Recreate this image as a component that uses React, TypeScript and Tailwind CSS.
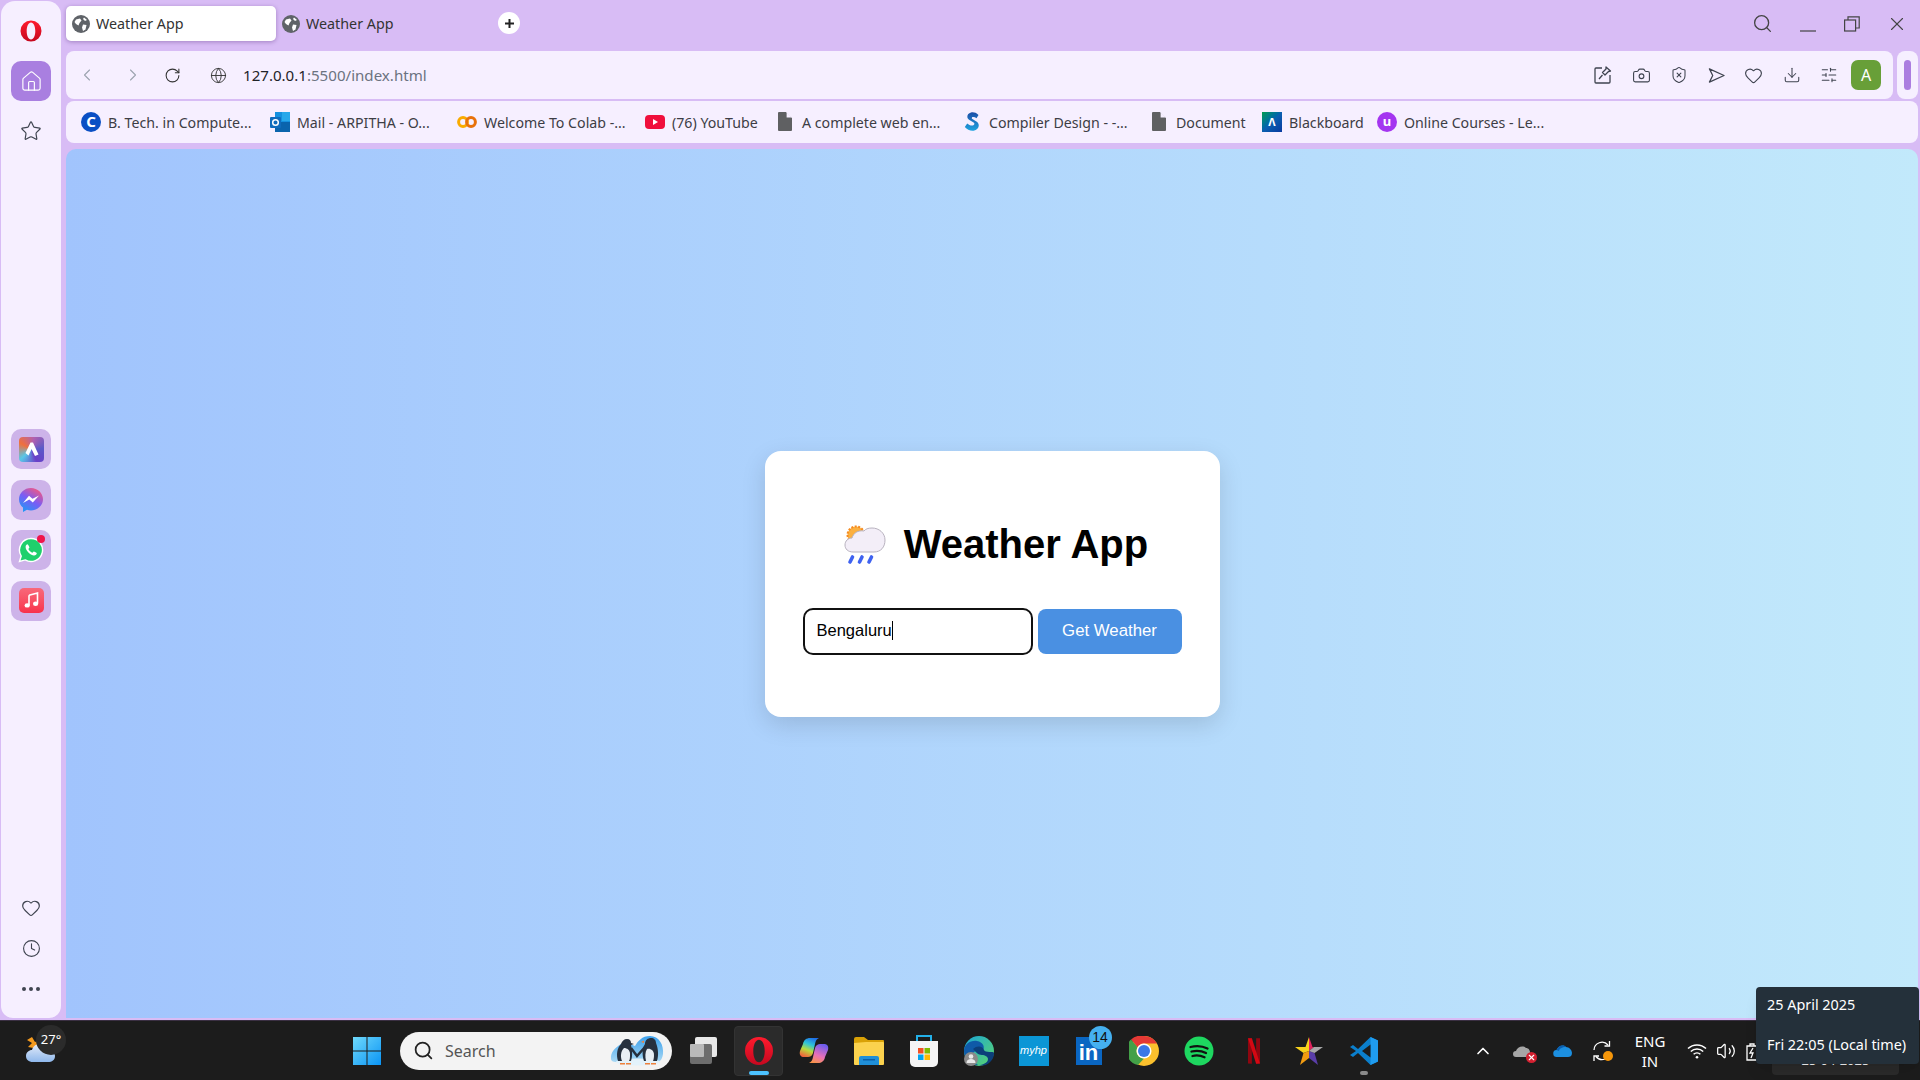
import React from 'react';
import {
  Camera, ChevronLeft, ChevronRight, ChevronUp, Clock, Download, Globe, Heart, Home, RotateCw,
  Search, ShieldX, SlidersHorizontal, Star, Volume2, X,
} from 'lucide-react';

const OperaLogo = ({ size = 24 }: { size?: number }) => (
  <svg width={size} height={size} viewBox="0 0 24 24">
    <defs>
      <linearGradient id="operaRed" x1="0" y1="0" x2="0" y2="1">
        <stop offset="0" stopColor="#ff1b2d" />
        <stop offset="1" stopColor="#c5081f" />
      </linearGradient>
    </defs>
    <path
      fillRule="evenodd"
      d="M12 1.500a10.500 10.500 0 1 0 0 21 10.500 10.500 0 0 0 0-21zM12 3.500c2.600 0 4.300 3.800 4.300 8.500s-1.700 8.500-4.300 8.500-4.300-3.800-4.300-8.500 1.700-8.500 4.300-8.500z"
      fill="url(#operaRed)"
    />
  </svg>
);

const TabGlobe = () => (
  <svg width="18" height="18" viewBox="0 0 18 18">
    <circle cx="9" cy="9" r="9" fill="#5f6368" />
    <path d="M4 4.500 8 3.500l1.500 2-2 2.500-1 2.500L4 9 2.500 7zM11 9.500l3.500.5-1 4.500-2.500 1.500-1-3.500zM12 2.500l3 2.500-2 1-2-2z" fill="#fff" />
  </svg>
);

const DocIcon = () => (
  <svg width="14" height="19" viewBox="0 0 14 19">
    <path d="M1 0h7l6 6v12a1 1 0 0 1-1 1H1a1 1 0 0 1-1-1V1a1 1 0 0 1 1-1z" fill="#5f6062" />
    <path d="M8.600 0 14 5.400H8.600z" fill="#f6efff" />
  </svg>
);

const bookmarks = [
  {
    label: 'B. Tech. in Compute...',
    box: 'w-[145px]',
    icon: (
      <span className="flex h-5 w-5 items-center justify-center rounded-full bg-[#0a4fc4] text-[15px] font-bold leading-none text-white">C</span>
    ),
  },
  {
    label: 'Mail - ARPITHA - O...',
    box: 'w-[143px]',
    icon: (
      <svg width="20" height="20" viewBox="0 0 20 20">
        <rect x="5" y="0" width="15" height="20" fill="#1490df" />
        <rect x="12" y="0" width="8" height="9" fill="#28a8ea" />
        <path d="M5 10h15v10H5z" fill="#0a64ad" />
        <rect x="0" y="5" width="11" height="11" rx="1" fill="#0f6cbd" />
        <circle cx="5.500" cy="10.500" r="2.800" fill="none" stroke="#fff" strokeWidth="1.500" />
      </svg>
    ),
  },
  {
    label: 'Welcome To Colab -...',
    box: 'w-[144px]',
    icon: (
      <svg width="20" height="14" viewBox="0 0 20 14">
        <circle cx="6" cy="7" r="4.400" fill="none" stroke="#f9ab00" strokeWidth="3" />
        <circle cx="14" cy="7" r="4.400" fill="none" stroke="#e8710a" strokeWidth="3" />
      </svg>
    ),
  },
  {
    label: '(76) YouTube',
    box: 'w-[86px]',
    icon: (
      <svg width="20" height="14" viewBox="0 0 20 14">
        <rect width="20" height="14" rx="4" fill="#f00f3c" />
        <path d="M8 4l5 3-5 3z" fill="#fff" />
      </svg>
    ),
  },
  { label: 'A complete web en...', box: 'w-[143px]', icon: <DocIcon /> },
  {
    label: 'Compiler Design - -...',
    box: 'w-[143px]',
    icon: (
      <svg width="16" height="22" viewBox="0 0 16 22">
        <defs>
          <linearGradient id="sLogo" x1="0" y1="0" x2="0" y2="1">
            <stop offset="0" stopColor="#1b4fa8" />
            <stop offset="1" stopColor="#1fa4e0" />
          </linearGradient>
        </defs>
        <path d="M14.500 4C12 1.500 9 1 7 1.600 3 2.600 2 7 5.400 9l4.200 2.500c1.500 1 .8 2.800-.9 3-1.900.3-3.900-.6-5.500-2L.800 16c2.200 2.500 5.400 4.200 8.800 3.800 5-.7 7-6 3.200-9L8.400 8.100c-1-.7-.6-1.900.5-2 1.200-.2 2.500.4 3.600 1.200z" fill="url(#sLogo)" />
      </svg>
    ),
  },
  { label: 'Document', box: 'w-[69px]', icon: <DocIcon /> },
  {
    label: 'Blackboard',
    box: 'w-[71px]',
    icon: (
      <span className="flex h-5 w-5 items-center justify-center bg-gradient-to-br from-[#0a9a4a] via-[#0b5fb0] to-[#0b3aa0] text-[11px] font-bold leading-none text-white">Λ</span>
    ),
  },
  {
    label: 'Online Courses - Le...',
    box: 'w-[142px]',
    icon: (
      <span className="flex h-5 w-5 items-center justify-center rounded-full bg-[#a435f0] text-[13px] font-bold leading-none text-white">u</span>
    ),
  },
];

const sideApps = [
  (
    <span key="aria" className="flex h-[25px] w-[25px] items-center justify-center rounded-[4px] bg-[conic-gradient(from_300deg,#f0703c,#b060b0,#5a5ac8,#6a3fc8,#58c8e8,#f0703c)]">
      <svg width="17" height="17" viewBox="0 0 17 17"><path d="M7.500 1.500 2.500 12l3 2.500L8.500 8l3.500 7 3.500-1.500L10 1.500z" fill="#fff" /></svg>
    </span>
  ),
  (
    <svg key="msg" width="26" height="26" viewBox="0 0 26 26">
      <defs>
        <linearGradient id="msgGrad" x1="0.200" y1="1" x2="0.800" y2="0">
          <stop offset="0" stopColor="#1d9bf6" />
          <stop offset="0.500" stopColor="#7a5cf5" />
          <stop offset="1" stopColor="#f9587b" />
        </linearGradient>
      </defs>
      <path d="M13 1C6.400 1 1 5.900 1 12.300c0 3.400 1.500 6.300 4 8.300V25l4-2.200c1.300.4 2.600.6 4 .6 6.600 0 12-5 12-11.100S19.600 1 13 1z" fill="url(#msgGrad)" />
      <path d="m5 16 6-7.200 3.500 3 6.500-3.300-6.200 7-3.500-3z" fill="#fff" />
    </svg>
  ),
  (
    <span key="wa" className="relative flex h-[26px] w-[26px] items-center justify-center">
      <svg width="26" height="26" viewBox="0 0 26 26">
        <path d="M13 1.500A11.500 11.500 0 0 0 3.200 19L1.500 24.500l5.700-1.600A11.500 11.500 0 1 0 13 1.500z" fill="#1fd06c" stroke="#fff" strokeWidth="1.400" />
        <path d="M9.400 7.200c-.6 0-1.800 1-1.800 2.700 0 3 3.700 7.600 8 8.600 1.800.3 3.200-1 3.200-2.200 0-.5-2.400-1.700-3-1.700-.4 0-1 1.200-1.400 1.200-1.200-.2-3.600-2.400-4-3.800 0-.4 1-1 1-1.500 0-.4-1.200-3.300-2-3.300z" fill="#fff" />
      </svg>
      <span className="absolute -right-[1px] -top-[2px] h-2 w-2 rounded-full bg-[#f0144a]" />
    </span>
  ),
  (
    <span key="music" className="flex h-[25px] w-[25px] items-center justify-center rounded-[5px] bg-gradient-to-b from-[#f8687a] to-[#f8304c]">
      <svg width="17" height="17" viewBox="0 0 17 17">
        <path d="M6 3.200 14.500 1v10.600" fill="none" stroke="#fff" strokeWidth="1.600" />
        <path d="M6 3.200v10" fill="none" stroke="#fff" strokeWidth="1.600" />
        <ellipse cx="4.200" cy="13.400" rx="2.600" ry="2.200" fill="#fff" />
        <ellipse cx="12.600" cy="11.800" rx="2.600" ry="2.200" fill="#fff" />
      </svg>
    </span>
  ),
];

const Sidebar = () => (
  <aside className="mb-[2px] ml-[1px] mt-[1px] flex w-[60px] flex-col items-center rounded-b-[12px] rounded-t-[14px] bg-[#f6efff] pt-[18px]">
    <OperaLogo size={24} />
    <button className="mt-[18px] flex h-10 w-10 items-center justify-center rounded-[10px] bg-[#a97fe0]">
      <Home size={23} strokeWidth={1.2} className="text-white" />
    </button>
    <Star size={22} strokeWidth={1.3} className="mt-[19px] text-[#3f4450]" />
    <div className="mt-[287px] flex flex-col gap-[10.500px]">
      {sideApps.map((icon, i) => (
        <div key={i} className="flex h-10 w-10 items-center justify-center rounded-[10px] bg-[#cdb3e9]">
          {icon}
        </div>
      ))}
    </div>
    <Heart size={20} strokeWidth={1.4} className="mt-[277px] text-[#3f4450]" />
    <Clock size={19} strokeWidth={1.4} className="mt-[21px] text-[#3f4450]" />
    <div className="mt-[29px] flex gap-[3px]">
      <span className="h-1 w-1 rounded-full bg-[#3f4450]" />
      <span className="h-1 w-1 rounded-full bg-[#3f4450]" />
      <span className="h-1 w-1 rounded-full bg-[#3f4450]" />
    </div>
  </aside>
);

const TabStrip = () => (
  <div className="flex h-[51px] items-start pt-[6px]">
    <div className="flex h-[35px] w-[210px] items-center gap-[6px] rounded-[5px] bg-white pl-[6px] shadow-[0_1px_4px_rgba(60,20,100,0.35)]">
      <TabGlobe />
      <span className="text-[14.300px] text-[#333]">Weather App</span>
    </div>
    <div className="ml-[6px] flex h-[35px] w-[205px] items-center gap-[6px]">
      <TabGlobe />
      <span className="text-[14.300px] text-[#333]">Weather App</span>
    </div>
    <button className="ml-[11px] mt-[6px] flex h-[22px] w-[22px] items-center justify-center rounded-full bg-white">
      <svg width="11" height="11" viewBox="0 0 11 11"><path d="M5.500 1v9M1 5.500h9" stroke="#222" strokeWidth="2" /></svg>
    </button>
    <div className="ml-auto flex h-[35px] items-center text-[#444]">
      <Search size={21} strokeWidth={1.5} />
      <svg width="16" height="16" viewBox="0 0 16 16" className="ml-[27px]"><path d="M0 15h16" stroke="#444" strokeWidth="1.200" /></svg>
      <svg width="16" height="16" viewBox="0 0 16 16" className="ml-[28px]" fill="none" stroke="#444" strokeWidth="1.200">
        <rect x="0.600" y="4" width="11" height="11" />
        <path d="M4 4V.8h11.200V12H12" />
      </svg>
      <X size={22} strokeWidth={1.2} className="ml-[26px] mr-[10px]" />
    </div>
  </div>
);

const CaptureIcon = () => (
  <svg width="18" height="18" viewBox="0 0 18 18" fill="none" stroke="#3f4450" strokeWidth="1.300" strokeLinejoin="round">
    <path d="M8 2H2a1 1 0 0 0-1 1v13a1 1 0 0 0 1 1h13a1 1 0 0 0 1-1V9" />
    <path d="m12 1 4.500 4-2 .5-3.500 3.500-2.500-2.500 3.500-3.500zM8.500 9 5 13" />
  </svg>
);

const FlowIcon = () => (
  <svg width="17" height="17" viewBox="0 0 18 18" fill="none" stroke="#3f4450" strokeWidth="1.300" strokeLinejoin="round">
    <path d="M1.500 2 17 9 1.500 16 5 9z" />
  </svg>
);

const AddressBar = () => (
  <div className="flex h-[48px]">
    <div className="flex flex-1 items-center rounded-[8px] bg-[#f6efff] pl-[11px]">
      <ChevronLeft size={20} strokeWidth={1.3} className="text-[#9ca3af]" />
      <ChevronRight size={20} strokeWidth={1.3} className="ml-[26px] text-[#9ca3af]" />
      <RotateCw size={17} strokeWidth={1.5} className="ml-[21px] text-[#333]" />
      <Globe size={17} strokeWidth={1.3} className="ml-[29px] text-[#333]" />
      <span className="ml-[16px] text-[15.100px] text-[#1f2328]">
        127.0.0.1<span className="text-[#6b7280]">:5500/index.html</span>
      </span>
      <div className="ml-auto mr-[-1px] flex items-center gap-[19.500px] text-[#3f4450]">
        <CaptureIcon />
        <Camera size={19} strokeWidth={1.4} />
        <ShieldX size={18} strokeWidth={1.4} />
        <FlowIcon />
        <Heart size={19} strokeWidth={1.4} />
        <Download size={18} strokeWidth={1.4} />
        <SlidersHorizontal size={18} strokeWidth={1.4} />
      </div>
      <div className="ml-[14px] mr-[12px] flex h-[30px] w-[30px] items-center justify-center rounded-[7px] bg-[#689f38] text-[16px] text-white">A</div>
    </div>
    <div className="ml-[4px] flex w-[21px] items-center justify-center rounded-[8px] bg-[#f6efff]">
      <span className="h-[30px] w-[7px] rounded-full bg-[#ab7de0]" />
    </div>
  </div>
);

const BookmarksBar = () => (
  <div className="mt-[2px] flex h-[42px] items-center gap-[17px] rounded-[8px] bg-[#f6efff] pl-[15px]">
    {bookmarks.map((b) => (
      <div key={b.label} className="flex items-center">
        <span className="flex w-5 justify-center">{b.icon}</span>
        <span className={`ml-[7px] mt-[2px] whitespace-nowrap text-[14.200px] text-[#3d3d45] ${b.box}`}>{b.label}</span>
      </div>
    ))}
  </div>
);

const CloudRainIcon = () => (
  <svg width="46" height="44" viewBox="0 0 46 44">
    <circle cx="13" cy="13" r="8.500" fill="#fbb040" stroke="#f58a1f" strokeWidth="2" strokeDasharray="2 1.500" />
    <path d="M10 30c-5 0-8-3-8-7 0-4 3-7 7-7 1.500-5 6-8 12-7 1.500-2 4-3 8-3 7 0 13 5 13 12 0 7-4 12-11 12z" fill="#f3eef8" stroke="#b8b2bf" strokeWidth="1" />
    <path d="M9.500 35 7 40M19 35l-2.500 5M28.500 35 26 40" stroke="#3f62f0" strokeWidth="3.600" strokeLinecap="round" />
  </svg>
);

const WeatherCard = () => (
  <div className="flex h-[266px] w-[455px] flex-col items-center rounded-[16px] bg-white pt-[69px] shadow-[0_8px_24px_rgba(0,0,0,0.13)]">
    <div className="ml-[7px] flex h-[48px] items-center gap-[15px]">
      <CloudRainIcon />
      <h1 className="font-['Liberation_Sans',Arial,sans-serif] text-[40px] font-bold leading-none text-black">Weather App</h1>
    </div>
    <div className="mt-[40px] flex items-center gap-[5px] font-['Liberation_Sans',Arial,sans-serif]">
      <div className="flex h-[47px] w-[230px] items-center rounded-[10px] border-2 border-[#111] pb-[1px] pl-[12px] text-[16.500px] text-black">
        Bengaluru<span className="h-[19px] w-px bg-black" />
      </div>
      <button className="h-[45px] w-[144px] rounded-[8px] bg-[#4a90e2] text-[16.800px] text-white">Get Weather</button>
    </div>
  </div>
);

const WeatherTile = () => (
  <div className="relative h-[44px] w-[50px]">
    <svg width="36" height="36" viewBox="0 0 36 36" className="ml-[8px] mt-[7px]">
      <defs>
        <linearGradient id="wCloud" x1="0" y1="0" x2="0" y2="1">
          <stop offset="0" stopColor="#e4ecfa" />
          <stop offset="1" stopColor="#8fb8ec" />
        </linearGradient>
      </defs>
      <path d="m7 5 3 5 5-2-1 9-11-2 4-4-5-3z" fill="#f49a1e" />
      <path d="M8 30c-4.500 0-7-2.500-7-6s3-6 6-6c1.500-5 6-7 10-6 3.500.7 5.500 3.500 6 6.500 4 .2 7 2 7 5.500 0 4-3 6-7 6z" fill="url(#wCloud)" />
    </svg>
    <span className="absolute left-[19px] -top-[7px] flex h-[30px] w-[30px] items-center justify-center rounded-full bg-[#2b2b2b] text-[13px] text-white">27°</span>
  </div>
);

const StartLogo = () => (
  <svg width="30" height="30" viewBox="0 0 30 30">
    <defs>
      <linearGradient id="winGrad" x1="0" y1="0" x2="1" y2="1">
        <stop offset="0" stopColor="#6fd9fb" />
        <stop offset="1" stopColor="#0a94f5" />
      </linearGradient>
    </defs>
    <path d="M1 1h13.500v13.500H1zM15.500 1H29v13.500H15.500zM1 15.500h13.500V29H1zM15.500 15.500H29V29H15.500z" fill="url(#winGrad)" />
  </svg>
);

const PenguinArt = () => (
  <svg width="54" height="32" viewBox="0 0 54 32">
    <defs>
      <linearGradient id="penSky" x1="0" y1="0" x2="0" y2="1">
        <stop offset="0" stopColor="#3aa0ec" />
        <stop offset="1" stopColor="#a8d8f4" />
      </linearGradient>
    </defs>
    <path d="M1 24C0 17 6 12 11 9c5-3 9 0 14 2 3-5 7-10 15-10 9 0 14 9 13 18-.5 4-2 7-5 8H6c-3 0-5-1-5-3z" fill="url(#penSky)" />
    <ellipse cx="28" cy="27" rx="22" ry="3.500" fill="#e3f2fb" />
    {/* left penguin */}
    <path d="M8 26c-2-6-1-13 3-17 1-3 3-5 6-5 3 0 4 2 4 4l3 1-3 1c1 5 2 10 0 16z" fill="#26303e" />
    <path d="M12 26c-2-5-1-10 2-13 3 0 6 2 6 6s0 5-1 7z" fill="#e8eef4" />
    <path d="M10 28h5v1.500h-5zM16 28h5v1.500h-5z" fill="#f0803a" />
    {/* right penguin */}
    <path d="M34 26c-2-6-2-13 1-17 0-4 3-6 6-6 3 0 5 2 5 5 2 5 3 12 1 18z" fill="#26303e" />
    <path d="M36 26c-1-4-1-9 1-12 3-1 7 1 7 6 0 3-.5 5-1 6z" fill="#e8eef4" />
    <path d="M34 8l-3-1 3-1.500z" fill="#f0803a" />
    <path d="M35 28h5v1.500h-5zM41 28h5v1.500h-5z" fill="#f0803a" />
    <path d="M21 13l6 8 8-9" fill="none" stroke="#26303e" strokeWidth="2.500" />
  </svg>
);

const SearchPill = () => (
  <div className="flex h-[38px] w-[272px] items-center rounded-full bg-[#f3f3f3] pl-[13px] pr-[8px]">
    <Search size={21} strokeWidth={2} className="text-[#222]" />
    <span className="ml-[11px] text-[16px] text-[#555]">Search</span>
    <span className="ml-auto flex"><PenguinArt /></span>
  </div>
);

const taskIcons = [
  {
    name: 'files',
    node: (
      <svg width="30" height="30" viewBox="0 0 30 30">
        <rect x="6" y="1" width="22" height="20" rx="2" fill="#e8e8e8" />
        <rect x="1" y="8" width="22" height="20" rx="2" fill="#6d6d6d" />
        <rect x="1" y="8" width="14" height="13" rx="1" fill="#b9b9b9" />
      </svg>
    ),
  },
  { name: 'opera', node: <OperaLogo size={32} />, active: true },
  {
    name: 'copilot',
    node: (
      <svg width="30" height="27" viewBox="0 0 30 27">
        <defs>
          <linearGradient id="copA" x1="0.700" y1="0" x2="0.300" y2="1">
            <stop offset="0" stopColor="#1f6fe8" />
            <stop offset="0.350" stopColor="#2ec4d8" />
            <stop offset="0.650" stopColor="#b8dc3c" />
            <stop offset="1" stopColor="#f0643c" />
          </linearGradient>
          <linearGradient id="copB" x1="0.700" y1="0" x2="0.300" y2="1">
            <stop offset="0" stopColor="#6a5cf0" />
            <stop offset="0.600" stopColor="#e870b8" />
            <stop offset="1" stopColor="#f8934a" />
          </linearGradient>
        </defs>
        <path d="M11 1h9c-2.500 1-3.500 3-4 6l-2 9c-1 3-3 4-5 4H5c-3 0-5-2-4-6L4 7c.7-4 3.500-6 7-6z" fill="url(#copA)" />
        <path d="M19 26h-9c2.500-1 3.500-3 4-6l2-9c1-3 3-4 5-4h4c3 0 5 2 4 6l-3 7c-.7 4-3.500 6-7 6z" fill="url(#copB)" />
      </svg>
    ),
  },
  {
    name: 'explorer',
    node: (
      <svg width="30" height="30" viewBox="0 0 30 30">
        <path d="M0 3a2 2 0 0 1 2-2h8l4 3h15a1 1 0 0 1 1 1v5H0z" fill="#d9a106" />
        <path d="M0 7l12-1h17a1 1 0 0 1 1 1v21a1 1 0 0 1-1 1H1a1 1 0 0 1-1-1z" fill="#fbd24e" />
        <path d="M5 29v-7a2 2 0 0 1 2-2h16a2 2 0 0 1 2 2v7z" fill="#1f8fd8" />
        <rect x="9" y="23" width="12" height="1.500" fill="#0b5fa8" />
      </svg>
    ),
  },
  {
    name: 'store',
    node: (
      <svg width="30" height="34" viewBox="0 0 30 34">
        <path d="M8 9V2h14v7" fill="none" stroke="#23b0e8" strokeWidth="2" />
        <path d="M1 7h28v21a5 5 0 0 1-5 5H6a5 5 0 0 1-5-5z" fill="#f5f5f5" />
        <rect x="9" y="14" width="5.500" height="5.500" fill="#f25022" />
        <rect x="15.500" y="14" width="5.500" height="5.500" fill="#7fba00" />
        <rect x="9" y="20.500" width="5.500" height="5.500" fill="#00a4ef" />
        <rect x="15.500" y="20.500" width="5.500" height="5.500" fill="#ffb900" />
      </svg>
    ),
  },
  {
    name: 'edge',
    node: (
      <svg width="32" height="32" viewBox="0 0 32 32">
        <defs>
          <linearGradient id="edgeGrad" x1="0" y1="0" x2="1" y2="1">
            <stop offset="0" stopColor="#1aa6d8" />
            <stop offset="1" stopColor="#5dd66a" />
          </linearGradient>
        </defs>
        <circle cx="16" cy="16" r="15" fill="url(#edgeGrad)" />
        <path d="M1 16C1 9 8 5 14 6c6 1 8 6 6 9-3 1-7 0-9 2-3 3-1 9 4 13C8 30 1 24 1 16z" fill="#0f5aa8" />
        <path d="M10 14c4-4 10-3 11 1 1 3 10 1 10 3 0 3-1 7-5 10-2 2-6 3-10 2 3 0 9-2 9-6 0-2-3-4-6-4-4 0-6-3-9-6z" fill="#0c3f7a" />
        <circle cx="8" cy="24" r="7" fill="#8a8a8a" />
        <circle cx="8" cy="21.500" r="2.300" fill="#e8e8e8" />
        <path d="M3.500 28c0-3 2-4 4.500-4s4.500 1 4.500 4z" fill="#e8e8e8" />
      </svg>
    ),
  },
  {
    name: 'myhp',
    node: (
      <span className="flex h-[30px] w-[30px] items-center justify-center bg-[#0b96d6] font-['Liberation_Sans',Arial,sans-serif] text-[11px] italic text-white">myhp</span>
    ),
  },
  {
    name: 'linkedin',
    node: (
      <span className="relative flex h-[28px] w-[26px] items-end justify-center bg-[#0a66c2] pb-px font-['Liberation_Sans',Arial,sans-serif] text-[22px] font-bold leading-none text-white">
        in
        <span className="absolute -right-[10px] -top-[11px] flex h-[23px] w-[23px] items-center justify-center rounded-full bg-[#45b0f0] text-[14px] font-normal text-[#111]">14</span>
      </span>
    ),
  },
  {
    name: 'chrome',
    node: (
      <svg width="30" height="30" viewBox="0 0 30 30">
        <circle cx="15" cy="15" r="15" fill="#fbc02d" />
        <path d="M15 0a15 15 0 0 1 13 7.500H15a7.500 7.500 0 0 0-6.500 3.800L2 3.500A15 15 0 0 1 15 0z" fill="#e53935" />
        <path d="M2 3.500l6.500 7.800a7.500 7.500 0 0 0 6.500 11.200L9 29A15 15 0 0 1 2 3.500z" fill="#43a047" />
        <circle cx="15" cy="15" r="7.500" fill="#fff" />
        <circle cx="15" cy="15" r="6" fill="#3b78e7" />
      </svg>
    ),
  },
  {
    name: 'spotify',
    node: (
      <svg width="30" height="30" viewBox="0 0 30 30">
        <circle cx="15" cy="15" r="14.500" fill="#1ed760" />
        <path d="M6.500 11c6-1.500 12-1 17 1.500M7.500 15.500c5-1.200 10-.8 14.500 1.500M8.500 20c4-1 8-.6 12 1.200" fill="none" stroke="#111" strokeWidth="2.300" strokeLinecap="round" />
      </svg>
    ),
  },
  {
    name: 'netflix',
    node: (
      <svg width="12" height="30" viewBox="0 0 14 30">
        <path d="M0 0h4.500v30L0 29.500z" fill="#8f0610" />
        <path d="M9.500 0H14v29.500L9.500 30z" fill="#8f0610" />
        <path d="M0 0h4.500L14 29.500 9.500 30z" fill="#d40813" />
      </svg>
    ),
  },
  {
    name: 'star',
    node: (
      <svg width="30" height="30" viewBox="0 0 30 30">
        <path d="M15 1l-3.500 10H1l8.500 6L15 15z" fill="#f8d21c" />
        <path d="M15 1v14l5-4h9H18.500z" fill="#e0245e" />
        <path d="M9.500 17 6 29l9-7V15z" fill="#f29c11" />
        <path d="M15 15v7l9 7-3.500-12z" fill="#5a3ea8" />
        <path d="M15 15l5.500 2 8.500-6h-9z" fill="#a8a8a8" />
      </svg>
    ),
  },
  {
    name: 'vscode',
    node: (
      <svg width="30" height="30" viewBox="0 0 30 30">
        <path d="M21.500 1 29 4.500v21L21.500 29 9 17l-5 4-3-2 6-4-6-4 3-2 5 4z" fill="#0b7fcc" />
        <path d="M21.500 1 29 4.500v21L21.500 29z" fill="#1f9cf0" />
        <path d="M21.500 8.500 13 15l8.500 6.500z" fill="#1c1c1c" />
      </svg>
    ),
    dot: true,
  },
];

const SyncIcon = () => (
  <svg width="22" height="22" viewBox="0 0 22 22">
    <path d="M2 10a8 8 0 0 1 14-5M18 12" fill="none" stroke="#fff" strokeWidth="1.300" />
    <path d="M17.500 1v5h-5" fill="none" stroke="#fff" strokeWidth="1.300" />
    <path d="M13 19a8 8 0 0 1-9-2.500" fill="none" stroke="#fff" strokeWidth="1.300" />
    <path d="M2 21v-5h5" fill="none" stroke="#fff" strokeWidth="1.300" />
    <circle cx="16" cy="16" r="5" fill="#f5960a" />
  </svg>
);

const WifiIcon = () => (
  <svg width="20" height="16" viewBox="0 0 20 16" fill="none" stroke="#fff" strokeWidth="1.500">
    <path d="M1 5.500a13 13 0 0 1 18 0M3.800 8.500a9 9 0 0 1 12.400 0M6.600 11.300a5 5 0 0 1 6.800 0" />
    <circle cx="10" cy="14.300" r="1.300" fill="#fff" stroke="none" />
  </svg>
);

const BatteryIcon = () => (
  <svg width="12" height="20" viewBox="0 0 12 20" fill="none" stroke="#fff" strokeWidth="1.300">
    <path d="M1 5h10v14H1zM4 5V3h4v2" />
    <path d="M7 7 4 12h3l-2 5" />
  </svg>
);

const Taskbar = () => (
  <footer className="relative flex h-[60px] items-center border-t border-t-[#3a2f42] bg-[#1c1c1c]">
    <div className="ml-[17px] w-[322px]"><WeatherTile /></div>
    <div className="flex w-[61px] justify-start pl-[13px]"><StartLogo /></div>
    <SearchPill />
    <div className="ml-[4px] flex items-center">
      {taskIcons.map((t) => (
        <div key={t.name} className="relative flex h-[50px] w-[55px] items-center justify-center">
          {t.active && <span className="absolute inset-0 mx-[3px] rounded-[4px] border border-[#333] bg-[#2b2b2b]" />}
          <span className="relative flex">{t.node}</span>
          {t.active && <span className="absolute bottom-[1px] h-[3.500px] w-5 rounded-full bg-[#4cc2ff]" />}
          {t.dot && <span className="absolute bottom-[1px] h-[3.500px] w-2 rounded-full bg-[#8a8a8a]" />}
        </div>
      ))}
    </div>
    <div className="ml-[82px] flex items-center text-white">
      <ChevronUp size={20} strokeWidth={2} />
      <span className="relative ml-[20px] flex">
        <svg width="20" height="14" viewBox="0 0 20 14"><path d="M3 13a3 3 0 0 1 0-6c1-4 7-6 10-3 3 0 5 3 4 9z" fill="#a6a6a6" /></svg>
        <span className="absolute -bottom-[5px] -right-[4px] flex h-[11px] w-[11px] items-center justify-center rounded-full bg-[#d32030]">
          <X size={9} strokeWidth={3} className="text-white" />
        </span>
      </span>
      <svg width="20" height="14" viewBox="0 0 20 14" className="ml-[20px]">
        <path d="M4 13a3.500 3.500 0 0 1-.5-7C5 2 10 0 13 3c3 0 6 3 6 6s-2 4-4 4z" fill="#1c8fe0" />
        <path d="M3.500 6C5 2 10 0 13 3 9 3 6 5 6 7z" fill="#0a5fb0" />
      </svg>
      <span className="ml-[19px] flex"><SyncIcon /></span>
      <div className="ml-[18px] flex w-[36px] flex-col items-center text-[15px] leading-[20px]">
        <span>ENG</span>
        <span>IN</span>
      </div>
      <span className="ml-[19px] flex"><WifiIcon /></span>
      <Volume2 size={20} strokeWidth={1.5} className="ml-[9px]" />
      <span className="ml-[10px] flex"><BatteryIcon /></span>
      <div className="ml-[14px] flex h-[49px] w-[127px] items-end justify-center rounded-[4px] bg-[#2b2b2b] pb-[5px] text-[13px]">25-04-2025</div>
    </div>
    <div className="absolute -top-[34px] left-[1756px] flex h-[77px] w-[163px] flex-col justify-between rounded-[4px] bg-[#24303a] pb-[8px] pl-[11px] pt-[7px] text-[14.400px] text-white shadow-lg">
      <span>25 April 2025</span>
      <span className="whitespace-nowrap">Fri 22:05 (Local time)</span>
    </div>
  </footer>
);

export default function App() {
  return (
    <div className="flex h-screen w-screen flex-col overflow-hidden bg-[#d8bcf5] font-['Noto_Sans',sans-serif]">
      <div className="flex h-[1020px]">
        <Sidebar />
        <div className="ml-[5px] mr-[2px] flex flex-1 flex-col">
          <TabStrip />
          <AddressBar />
          <BookmarksBar />
          <main className="mb-[2px] mt-[6px] flex flex-1 items-center justify-center rounded-t-[10px] bg-gradient-to-r from-[#a1c4fd] to-[#c2e9fb]">
            <WeatherCard />
          </main>
        </div>
      </div>
      <Taskbar />
    </div>
  );
}
